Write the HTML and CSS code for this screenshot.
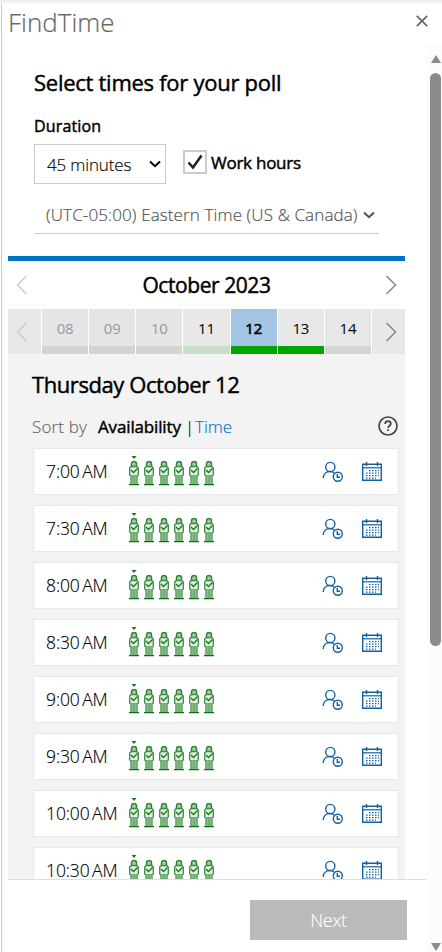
FILE: index.html
```
<!DOCTYPE html>
<html lang="en">
<head>
<meta charset="utf-8" />
<meta name="viewport" content="width=device-width, initial-scale=1.0">
<title>FindTime</title>
<link rel="stylesheet" href="styles.css">
</head>
<body>
<svg class="defs">
	<symbol id="person" viewBox="0 0 10 25">
		<path d="M2.500 6V3.500C2.500 1.800 3.600 1 5 1s2.500.8 2.500 2.500V6" fill="#a9cdaa" stroke="#2f8537" stroke-width="1.500"/>
		<path d="M.7 7.500L2.200 6h5.600l1.500 1.500v7L8 15.500H2L.7 14.500z" fill="#e3efe3" stroke="#3c8c42" stroke-width="1.300"/>
		<path d="M2 9.500l2.500 2.500 4-4" fill="none" stroke="#187a20" stroke-width="1.400"/>
		<path d="M1.300 15h7.400v9H1.300z" fill="#86ba88"/>
		<path d="M2 15v9M8 15v9" stroke="#5a9e5e" stroke-width="1"/>
		<path d="M5 15v9" stroke="#5a9e5e" stroke-width=".8"/>
		<path d="M0 24.300h10" stroke="#0b6e12" stroke-width="1.400"/>
	</symbol>
	<symbol id="userclock" viewBox="0 0 22 22">
		<g fill="none" stroke="#1160a3" stroke-width="1.400">
			<circle cx="8.300" cy="6" r="4.600"/>
			<path d="M1.200 17c.1-4 3-6.500 6.800-6.500 1.800 0 3 .5 4.200 1.400"/>
			<circle cx="15.800" cy="15.800" r="4.500"/>
			<path d="M15.300 13v3.300h2.700"/>
		</g>
	</symbol>
	<symbol id="calendar" viewBox="0 0 22 22">
		<g fill="none" stroke="#1160a3">
			<path d="M1.700 3.200h18.600v16.100H1.700z" stroke-width="1.400"/>
			<path d="M1.500 6.800h19" stroke-width="1.200"/>
			<path d="M5.500 1v4M16.500 1v4" stroke-width="1.400"/>
			<path d="M8 9.700h10M5 12.200h13M5 14.700h13M5 17.200h10" stroke-width="1.200" stroke-dasharray="1.500 1.500"/>
		</g>
	</symbol>
	<symbol id="down" viewBox="0 0 12 8">
		<path d="M1 1.500l5 4.700 5-4.700" fill="none" stroke="currentColor" stroke-width="2"/>
	</symbol>
	<symbol id="prev" viewBox="0 0 12 20">
		<path d="M10.500 1L1.500 10l9 9" fill="none" stroke="currentColor" stroke-width="1.500"/>
	</symbol>
	<symbol id="next" viewBox="0 0 12 20">
		<path d="M1.500 1l9 9-9 9" fill="none" stroke="currentColor" stroke-width="1.500"/>
	</symbol>
	<symbol id="people" viewBox="0 0 85 30">
		<path d="M2.500 0h5L5 3z" fill="#187a20"/>
		<use href="#person" x="0" y="4.500" width="10" height="25"/>
		<use href="#person" x="15" y="4.500" width="10" height="25"/>
		<use href="#person" x="30" y="4.500" width="10" height="25"/>
		<use href="#person" x="45" y="4.500" width="10" height="25"/>
		<use href="#person" x="60" y="4.500" width="10" height="25"/>
		<use href="#person" x="75" y="4.500" width="10" height="25"/>
	</symbol>
</svg>
<div class="pane">
	<div class="pane_head">
		<span class="app_name">FindTime</span>
		<svg class="close" viewBox="0 0 12 12"><path d="M.8.8l10.400 10.400M11.200.8L.8 11.200" stroke="#666" stroke-width="1.700"/></svg>
	</div>
	<div class="pane_body">
		<div class="main">
			<div class="settings">
				<h1>Select times for your poll</h1>
				<label class="label">Duration</label>
				<div class="duration_row">
					<div class="select"><span>45 minutes</span><svg><use href="#down"/></svg></div>
					<div class="checkbox"><svg viewBox="0 0 18 18"><path d="M2.500 9.500l4.500 5L15.500 2.500" fill="none" stroke="#222" stroke-width="2.600"/></svg></div>
					<span class="work">Work hours</span>
				</div>
				<div class="timezone"><span>(UTC-05:00) Eastern Time (US &amp; Canada)</span><svg><use href="#down"/></svg></div>
			</div>
			<div class="picker">
				<div class="month">
					<svg class="arrow off"><use href="#prev"/></svg>
					<span>October 2023</span>
					<svg class="arrow"><use href="#next"/></svg>
				</div>
				<div class="days">
					<div class="nav"><svg class="arrow off"><use href="#prev"/></svg></div>
					<div class="day past">08</div>
					<div class="day past">09</div>
					<div class="day past">10</div>
					<div class="day some">11</div>
					<div class="day free active">12</div>
					<div class="day free">13</div>
					<div class="day">14</div>
					<div class="nav"><svg class="arrow"><use href="#next"/></svg></div>
				</div>
				<div class="slots">
					<h2>Thursday October 12</h2>
					<div class="sort">
						<span class="by">Sort by</span><span class="avail">Availability</span><span class="bar">|</span><span class="time_link">Time</span>
						<svg class="help" viewBox="0 0 20 20"><circle cx="10" cy="10" r="9" fill="none" stroke="#444" stroke-width="1.700"/><path d="M7.200 8c0-1.800 1.100-2.800 2.800-2.800s2.800 1 2.800 2.500c0 2-2.700 2-2.700 4.200M10.100 13.300v1.800" fill="none" stroke="#444" stroke-width="1.800"/></svg>
					</div>
					<div class="slot"><span class="time">7:00 AM</span><svg class="people"><use href="#people"/></svg><svg class="icon"><use href="#userclock"/></svg><svg class="icon"><use href="#calendar"/></svg></div>
					<div class="slot"><span class="time">7:30 AM</span><svg class="people"><use href="#people"/></svg><svg class="icon"><use href="#userclock"/></svg><svg class="icon"><use href="#calendar"/></svg></div>
					<div class="slot"><span class="time">8:00 AM</span><svg class="people"><use href="#people"/></svg><svg class="icon"><use href="#userclock"/></svg><svg class="icon"><use href="#calendar"/></svg></div>
					<div class="slot"><span class="time">8:30 AM</span><svg class="people"><use href="#people"/></svg><svg class="icon"><use href="#userclock"/></svg><svg class="icon"><use href="#calendar"/></svg></div>
					<div class="slot"><span class="time">9:00 AM</span><svg class="people"><use href="#people"/></svg><svg class="icon"><use href="#userclock"/></svg><svg class="icon"><use href="#calendar"/></svg></div>
					<div class="slot"><span class="time">9:30 AM</span><svg class="people"><use href="#people"/></svg><svg class="icon"><use href="#userclock"/></svg><svg class="icon"><use href="#calendar"/></svg></div>
					<div class="slot"><span class="time">10:00 AM</span><svg class="people"><use href="#people"/></svg><svg class="icon"><use href="#userclock"/></svg><svg class="icon"><use href="#calendar"/></svg></div>
					<div class="slot"><span class="time">10:30 AM</span><svg class="people"><use href="#people"/></svg><svg class="icon"><use href="#userclock"/></svg><svg class="icon"><use href="#calendar"/></svg></div>
				</div>
			</div>
			<div class="footer"><button class="next_btn">Next</button></div>
		</div>
		<div class="scroll">
			<i class="up"></i>
			<div class="thumb"></div>
			<i class="dn"></i>
		</div>
	</div>
</div>
</body>
</html>
```
FILE: styles.css
```
*{box-sizing:border-box;}
body{margin:0;background:#fff;color:#000;font-family:"Open Sans","Noto Sans",sans-serif;font-weight:300;font-size:17px;overflow:hidden;-webkit-text-stroke:.15px;}
h1,h2{margin:0;font-weight:400;white-space:nowrap;}
h1,h2,.label,.work,.month,.avail{-webkit-text-stroke:.45px;}
span{white-space:nowrap;}
svg{display:block;flex:none;}
.defs{position:absolute;width:0;height:0;}
.pane{height:952px;display:flex;flex-direction:column;padding-top:4px;background:linear-gradient(#ebebeb,#fff 5px);}
.pane_head{height:41px;flex:none;display:flex;justify-content:space-between;padding:0 14px 0 6px;border-left:1px solid #ccc;margin-left:1px;}
.app_name{font-size:26px;line-height:37px;color:#666;}
.close{width:12px;height:12px;margin-top:11px;}
.pane_body{flex:1;display:flex;min-height:0;border-left:1px solid #ccc;margin-left:1px;}
.main{flex:1;padding-left:6px;display:flex;flex-direction:column;}
.settings{height:211px;flex:none;padding:21px 0 0 26px;}
h1{font-size:22px;line-height:32px;letter-spacing:-.27px;}
.label{display:block;font-size:16px;font-weight:400;line-height:22px;margin-top:17px;letter-spacing:.15px;}
.duration_row{display:flex;margin-top:7px;}
.select{width:132px;height:40px;border:1px solid #ccc;display:flex;align-items:center;justify-content:space-between;padding:0 4px 0 12px;}
.select span{letter-spacing:-.15px;}
.select svg,.timezone svg{width:12px;height:8px;}
.checkbox{width:24px;height:24px;border:2px solid #ccc;margin:6px 4px 0 17px;padding:1px;}
.checkbox svg{width:18px;height:18px;}
.work{font-weight:400;font-size:17px;line-height:38px;letter-spacing:-.25px;}
.timezone{width:345px;height:38px;margin-top:12px;border-bottom:1px solid #ccc;display:flex;align-items:center;justify-content:space-between;padding:0 4px 0 12px;color:#505050;letter-spacing:.12px;}
.picker{width:397px;flex:1;min-height:0;overflow:hidden;border-top:5px solid #0072c6;background:#f3f3f3;}
.month{height:48px;background:#fff;display:flex;align-items:center;justify-content:space-between;padding:0 8px;font-size:21px;font-weight:400;letter-spacing:-.43px;}
.arrow{width:12px;height:20px;color:#888;}
.arrow.off{color:#ccc;}
.days{height:45px;display:grid;grid-template-columns:33px repeat(7,1fr) 33px;gap:1px;background:#fff;}
.nav{background:#e8e8e8;display:flex;align-items:center;justify-content:center;}
.nav:first-child{padding-right:5px;}
.nav:last-child{padding-left:5px;}
.day{background:#e8e8e8;border-bottom:8px solid #d4d4d4;text-align:center;font-size:15px;line-height:38px;height:45px;font-weight:400;letter-spacing:-.2px;-webkit-text-stroke:0;}
.past{color:#999;background:#e5e5e5;}
.some{border-color:#c6dfc6;}
.free{border-color:#00a600;}
.active{background:#a3c5e4;-webkit-text-stroke:.6px;}
.slots{padding:14px 6px 0 25px;}
h2{font-size:22px;line-height:33px;letter-spacing:-.42px;margin-left:-1px;}
.sort{display:flex;align-items:center;height:24px;margin:14px 1px 9px -1px;line-height:22px;padding-bottom:1px;}
.by{color:#666;width:66px;letter-spacing:.15px;}
.avail{font-weight:400;width:87px;letter-spacing:-.15px;}
.bar{width:10px;}
.time_link{color:#0072c6;}
.help{width:20px;height:20px;margin:-1px 0 0 auto;}
.slot{height:47px;margin-bottom:10px;background:#fff;border:1px solid #e8e8e8;display:flex;align-items:center;padding:0 15px 0 12px;}
.time{width:83px;font-size:17.500px;line-height:24px;padding-bottom:1px;letter-spacing:-.1px;word-spacing:-2px;}
.people{width:85px;height:30px;margin:-2px auto 0 0;}
.icon{width:22px;height:22px;}
.icon:last-child{margin-left:17px;}
.footer{width:418px;height:73px;flex:none;border-top:1px solid #ddd;padding:20px 19px 0 0;}
.next_btn{display:block;width:157px;height:40px;margin-left:auto;padding:0;border:0;background:#bababa;color:#fff;font:300 18px/40px "Open Sans",sans-serif;letter-spacing:-.3px;}
.scroll{width:16px;background:#fcfcfc;display:flex;flex-direction:column;align-items:flex-end;padding:10px 1px 1px 0;}
.scroll i{border:5.500px solid transparent;border-top:0;border-bottom:8px solid #8b8b8b;}
.scroll .dn{border-bottom:0;border-top:8px solid #8b8b8b;margin-top:auto;}
.thumb{width:11px;height:573px;margin-top:10px;border-radius:6px;background:#8b8b8b;}
```
